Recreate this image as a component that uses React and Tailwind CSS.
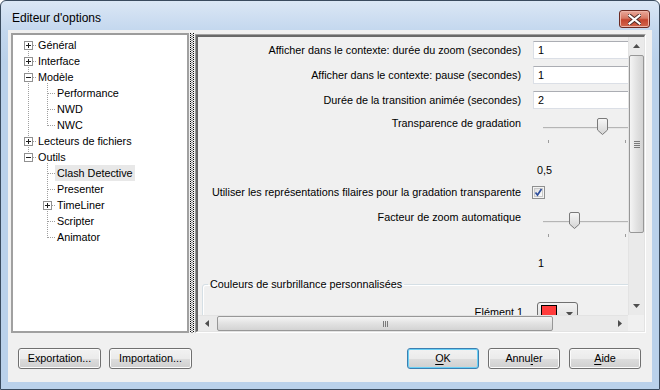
import React from "react";

const TREE = [
  { label: "Général", lvl: 0, box: "+" },
  { label: "Interface", lvl: 0, box: "+" },
  { label: "Modèle", lvl: 0, box: "-" },
  { label: "Performance", lvl: 1 },
  { label: "NWD", lvl: 1 },
  { label: "NWC", lvl: 1 },
  { label: "Lecteurs de fichiers", lvl: 0, box: "+" },
  { label: "Outils", lvl: 0, box: "-" },
  { label: "Clash Detective", lvl: 1, selected: true },
  { label: "Presenter", lvl: 1 },
  { label: "TimeLiner", lvl: 1, box: "+" },
  { label: "Scripter", lvl: 1 },
  { label: "Animator", lvl: 1 },
];

const rowY = (i) => 10 + 16 * i;

function ExpandBox({ cx, cy, sign }) {
  return (
    <g>
      <rect x={cx - 3.5} y={cy - 3.5} width="8" height="8" fill="#ffffff" stroke="#919191" />
      <line x1={cx - 2} y1={cy + 0.5} x2={cx + 3} y2={cy + 0.5} stroke="#1e1e1e" />
      {sign === "+" && <line x1={cx + 0.5} y1={cy - 2} x2={cx + 0.5} y2={cy + 3} stroke="#1e1e1e" />}
    </g>
  );
}

function TreeLines() {
  const dot = { stroke: "#a0a0a0", strokeDasharray: "1 1" };
  return (
    <svg className="absolute inset-0 pointer-events-none" width="174" height="296">
      <line x1="15.5" y1={rowY(0)} x2="15.5" y2={rowY(7) + 1} {...dot} />
      <line x1="34.5" y1={rowY(2) + 6} x2="34.5" y2={rowY(5) + 1} {...dot} />
      <line x1="34.5" y1={rowY(7) + 6} x2="34.5" y2={rowY(12) + 1} {...dot} />
      {TREE.map((r, i) =>
        r.lvl === 0 ? (
          <line key={i} x1="20" y1={rowY(i) + 0.5} x2="24" y2={rowY(i) + 0.5} {...dot} />
        ) : (
          <line key={i} x1="35" y1={rowY(i) + 0.5} x2="43" y2={rowY(i) + 0.5} {...dot} />
        )
      )}
      {TREE.map((r, i) =>
        r.box ? <ExpandBox key={"b" + i} cx={r.lvl === 0 ? 15 : 34} cy={rowY(i)} sign={r.box} /> : null
      )}
    </svg>
  );
}

function Splitter() {
  // dotted drag bar between the tree and the options panel
  return (
    <svg width="6" height="300" className="shrink-0">
      <line x1="1.5" y1="0" x2="1.5" y2="300" stroke="#000" strokeDasharray="1 1" />
      <line x1="2.5" y1="1" x2="2.5" y2="300" stroke="#9a9a9a" strokeDasharray="1 1" />
      <line x1="3.5" y1="1" x2="3.5" y2="300" stroke="#9a9a9a" strokeDasharray="1 1" />
      <line x1="4.5" y1="0" x2="4.5" y2="300" stroke="#000" strokeDasharray="1 1" />
    </svg>
  );
}

function Slider({ pos }) {
  const x = pos;
  return (
    <svg width="110" height="30" className="shrink-0">
      <defs>
        <linearGradient id={"th" + pos} x1="0" y1="0" x2="0" y2="1">
          <stop offset="0" stopColor="#f7f7f7" />
          <stop offset="1" stopColor="#d4d4d4" />
        </linearGradient>
      </defs>
      <line x1="10" y1="11.5" x2="110" y2="11.5" stroke="#b5b5b5" />
      <line x1="10" y1="12.5" x2="110" y2="12.5" stroke="#e6e6e6" />
      <line x1="15.5" y1="24" x2="15.5" y2="27" stroke="#9c9c9c" />
      <line x1="92.5" y1="24" x2="92.5" y2="27" stroke="#9c9c9c" />
      <path
        d={`M${x + 0.5} 4 Q${x + 0.5} 2.5 ${x + 2} 2.5 H${x + 9} Q${x + 10.5} 2.5 ${x + 10.5} 4 V14 L${x + 5.5} 18.5 L${x + 0.5} 14 Z`}
        fill={`url(#th${pos})`}
        stroke="#7a7a7a"
      />
    </svg>
  );
}

function FieldRow({ label, value }) {
  return (
    <div className="h-[25px] flex items-start">
      <div className="w-[323px] h-[18px] flex items-center justify-end whitespace-nowrap">{label}</div>
      <div className="ml-[12px] w-[130px] h-[18px] bg-white border border-[#dbdfe6] border-t-[#abadb3] pl-[4px] flex items-center">
        {value}
      </div>
    </div>
  );
}

function SliderRow({ label, pos }) {
  return (
    <div className="h-[40px] flex items-start">
      <div className="w-[323px] leading-[14px] text-right whitespace-nowrap">{label}</div>
      <div className="ml-[12px]">
        <Slider pos={pos} />
      </div>
    </div>
  );
}

function Checkbox() {
  return (
    <svg width="13" height="13" className="shrink-0">
      <defs>
        <linearGradient id="cbg" x1="0" y1="0" x2="1" y2="1">
          <stop offset="0" stopColor="#dcdcdc" />
          <stop offset="1" stopColor="#ffffff" />
        </linearGradient>
      </defs>
      <rect x="0.5" y="0.5" width="12" height="12" fill="#f4f4f4" stroke="#8e8f8f" />
      <rect x="2.5" y="2.5" width="8" height="8" fill="url(#cbg)" stroke="#c9c9c9" />
      <path d="M3.5 6.5 L5.5 9 L9.5 3" fill="none" stroke="#2f4f9c" strokeWidth="1.7" />
    </svg>
  );
}

function Arrow({ dir }) {
  const pts = {
    up: "0,4 3.5,0 7,4",
    down: "0,0 3.5,4 7,0",
    left: "4,0 0,3.5 4,7",
    right: "0,0 4,3.5 0,7",
  }[dir];
  const w = dir === "up" || dir === "down" ? 7 : 4;
  const h = dir === "up" || dir === "down" ? 4 : 7;
  return (
    <svg width={w} height={h}>
      <polygon points={pts} fill="#4d4d4d" />
    </svg>
  );
}

function WinButton({ children, w, focused }) {
  return (
    <button
      className={`${w} h-[21px] rounded-[3px] border text-[10.8px] text-black flex items-center justify-center bg-[linear-gradient(to_bottom,#f2f2f2_0%,#ebebeb_50%,#dddddd_51%,#cfcfcf_100%)] ${
        focused
          ? "border-[#3c7fb1] shadow-[inset_0_0_0_1px_#6ad0f5]"
          : "border-[#707070] shadow-[inset_0_0_0_1px_#fbfbfb]"
      }`}
    >
      {children}
    </button>
  );
}

export default function App() {
  return (
    <div className="w-[660px] h-[390px] bg-white font-['Liberation_Sans',Arial,sans-serif] text-[10.8px] text-black">
      <div className="w-full h-full rounded-t-[6px] border border-[#3a4b5e] bg-[linear-gradient(to_bottom,#dbe7f5_0px,#c3d7ee_30px,#bad1ea_60px,#bad1ea_100%)] flex flex-col">
        {/* Title bar */}
        <div className="h-[29px] shrink-0 flex items-start justify-between pl-[11px] pr-[9px]">
          <div className="mt-[9px] text-[12px] leading-[16px] text-black">Editeur d'options</div>
          <div className="mt-[9px] w-[31px] h-[18px] rounded-[3px] border border-[#6b2a22] bg-[linear-gradient(to_bottom,#e9a99b_0%,#d77965_45%,#c4452f_55%,#d3684f_100%)] shadow-[inset_0_0_0_1px_#efb5a8] flex items-center justify-center">
            <svg width="13" height="11">
              <path d="M1.5 1.5 L11.5 9.5 M11.5 1.5 L1.5 9.5" stroke="#4a2a26" strokeWidth="4" strokeLinecap="square" />
              <path d="M1.5 1.5 L11.5 9.5 M11.5 1.5 L1.5 9.5" stroke="#ffffff" strokeWidth="2.2" strokeLinecap="square" />
            </svg>
          </div>
        </div>

        {/* Client area */}
        <div className="mx-[7px] h-[352px] bg-[#f0f0f0] flex flex-col pt-[3px] pl-[3px] pr-[6px]">
          <div className="h-[300px] flex">
            {/* Tree */}
            <div className="w-[178px] h-[300px] border-2 border-[#a0a0a0] border-t-[#9c9c9c] bg-white">
              <div className="relative w-[174px] h-[296px] pt-[2px]">
                <TreeLines />
                {TREE.map((r) => (
                  <div
                    key={r.label}
                    className={`relative h-[16px] flex items-center whitespace-nowrap ${r.lvl === 0 ? "pl-[25px]" : "pl-[42px]"}`}
                  >
                    {r.lvl === 0 ? (
                      <span>{r.label}</span>
                    ) : (
                      <span className={`px-[2px] leading-[16px] ${r.selected ? "bg-[#e8e8e8] w-[80px]" : ""}`}>{r.label}</span>
                    )}
                  </div>
                ))}
              </div>
            </div>

            <Splitter />

            {/* Options panel */}
            <div className="mt-[1px] w-[451px] h-[299px] border-t border-l border-[#a0a0a0] border-r-white border-b-white border-r border-b">
              <div className="w-full h-full border-t-2 border-l-2 border-[#696969] border-r border-b border-r-[#e3e3e3] border-b-[#e3e3e3] flex flex-col">
                <div className="flex flex-1 min-h-0">
                  {/* viewport */}
                  <div className="w-[430px] h-[278px] overflow-hidden">
                    <div className="w-[480px] pt-[4px]">
                      <FieldRow label="Afficher dans le contexte: durée du zoom (secondes)" value="1" />
                      <FieldRow label="Afficher dans le contexte: pause (secondes)" value="1" />
                      <FieldRow label="Durée de la transition animée (secondes)" value="2" />
                      <SliderRow label="Transparence de gradation" pos={64} />
                      <div className="h-[28px] flex items-center pl-[339px]">0,5</div>
                      <div className="h-[26px] flex items-start pt-[2px]">
                        <div className="w-[323px] h-[13px] flex items-center justify-end whitespace-nowrap">
                          Utiliser les représentations filaires pour la gradation transparente
                        </div>
                        <div className="ml-[11px]">
                          <Checkbox />
                        </div>
                      </div>
                      <SliderRow label="Facteur de zoom automatique" pos={36} />
                      <div className="h-[26px] flex items-center pl-[340px]">1</div>
                      <fieldset className="ml-[4px] w-[470px] h-[60px] border border-[#d5dfe5] rounded-[3px] shadow-[inset_1px_1px_0_#ffffff]">
                        <legend className="ml-[5px] px-[2px] leading-[16px]">Couleurs de surbrillance personnalisées</legend>
                        <div className="mt-[10px] flex items-center">
                          <div className="w-[320px] text-right whitespace-nowrap">Elément 1</div>
                          <div className="ml-[14px] w-[41px] h-[20px] rounded-[3px] border border-[#707070] bg-[linear-gradient(to_bottom,#f2f2f2,#dddddd)] flex items-start pt-[2px] pl-[3px] gap-[9px]">
                            <div className="w-[16px] h-[14px] border border-black bg-[#ff3c3c]" />
                            <div className="mt-[7px]">
                              <Arrow dir="down" />
                            </div>
                          </div>
                        </div>
                      </fieldset>
                    </div>
                  </div>

                  {/* vertical scrollbar */}
                  <div className="w-[16px] h-[278px] bg-[#eaeaea] border-l border-[#e3e3e3] flex flex-col">
                    <div className="h-[18px] flex items-center justify-center">
                      <Arrow dir="up" />
                    </div>
                    <div className="h-[178px] rounded-[2px] border border-[#979797] bg-[linear-gradient(to_right,#f4f4f4,#e2e2e2_50%,#d3d3d3)] flex items-center justify-center">
                      <div className="flex flex-col gap-[1px]">
                        <div className="w-[6px] h-[1px] bg-[#7a7a7a]" />
                        <div className="w-[6px] h-[1px] bg-[#7a7a7a]" />
                        <div className="w-[6px] h-[1px] bg-[#7a7a7a]" />
                        <div className="w-[6px] h-[1px] bg-[#7a7a7a]" />
                      </div>
                    </div>
                    <div className="flex-1" />
                    <div className="h-[18px] flex items-center justify-center">
                      <Arrow dir="down" />
                    </div>
                  </div>
                </div>

                {/* horizontal scrollbar */}
                <div className="h-[16px] flex">
                  <div className="w-[430px] h-[16px] bg-[#eaeaea] border-t border-[#e3e3e3] flex items-stretch">
                    <div className="w-[17px] flex items-center justify-center">
                      <Arrow dir="left" />
                    </div>
                    <div className="ml-[2px] w-[336px] rounded-[2px] border border-[#979797] bg-[linear-gradient(to_bottom,#f4f4f4,#e2e2e2_50%,#d3d3d3)] flex items-center justify-center">
                      <div className="flex gap-[1px]">
                        <div className="w-[1px] h-[6px] bg-[#7a7a7a]" />
                        <div className="w-[1px] h-[6px] bg-[#7a7a7a]" />
                        <div className="w-[1px] h-[6px] bg-[#7a7a7a]" />
                      </div>
                    </div>
                    <div className="flex-1" />
                    <div className="w-[17px] flex items-center justify-center">
                      <Arrow dir="right" />
                    </div>
                  </div>
                  <div className="flex-1 bg-[#f0f0f0]" />
                </div>
              </div>
            </div>
          </div>

          {/* Buttons */}
          <div className="mt-[15px] flex items-start pl-[7px] pr-[5px]">
            <div className="flex gap-[8px]">
              <WinButton w="w-[83px]">Exportation...</WinButton>
              <WinButton w="w-[83px]">Importation...</WinButton>
            </div>
            <div className="flex-1" />
            <div className="flex gap-[9px]">
              <WinButton w="w-[72px]" focused>
                <span className="underline underline-offset-2">O</span>K
              </WinButton>
              <WinButton w="w-[72px]">
                Annu<span className="underline underline-offset-2">l</span>er
              </WinButton>
              <WinButton w="w-[72px]">
                <span className="underline underline-offset-2">A</span>ide
              </WinButton>
            </div>
          </div>
        </div>
      </div>
    </div>
  );
}
